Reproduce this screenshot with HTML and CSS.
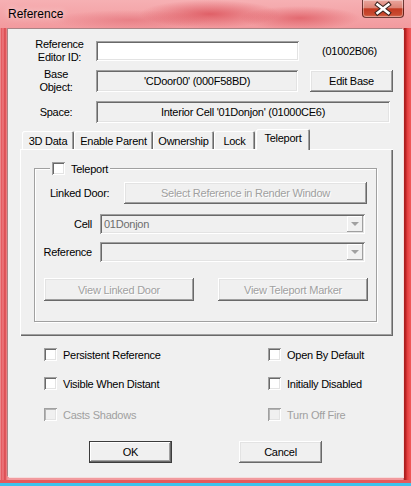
FILE: index.html
```html
<!DOCTYPE html>
<html>
<head>
<meta charset="utf-8">
<link rel="stylesheet" href="styles.css">
</head>
<body>
<div class="window">
  <div class="titlebar">
    <span class="title">Reference</span>
    <div class="close">
      <svg width="42" height="18" viewBox="0 0 42 18">
        <path d="M15.5 4.5 L26.5 13 M26.5 4.5 L15.5 13" stroke="#3b2420" stroke-width="4.6" stroke-linecap="square" fill="none"/>
        <path d="M15.5 4.5 L26.5 13 M26.5 4.5 L15.5 13" stroke="#ffffff" stroke-width="2.6" stroke-linecap="square" fill="none"/>
      </svg>
    </div>
  </div>
  <div class="client">
    <div class="row r1">
      <div class="lbl l1">Reference<br>Editor ID:</div>
      <div class="edit w-id"></div>
      <div class="formid">(01002B06)</div>
    </div>
    <div class="row r2">
      <div class="lbl l2">Base<br>Object:</div>
      <div class="static w-base">'CDoor00' (000F58BD)</div>
      <div class="btn btn-edit">Edit Base</div>
    </div>
    <div class="row r3">
      <div class="lbl l2">Space:</div>
      <div class="static w-space">Interior Cell '01Donjon' (01000CE6)</div>
    </div>
    <div class="tabs">
      <div class="tab t1">3D Data</div>
      <div class="tab t2">Enable Parent</div>
      <div class="tab t3">Ownership</div>
      <div class="tab t4">Lock</div>
      <div class="tab active">Teleport</div>
    </div>
    <div class="panel">
      <div class="group">
        <div class="legend"><span class="cb"></span><span>Teleport</span></div>
        <div class="grow g1">
          <span class="ld-lbl">Linked Door:</span>
          <div class="btn dis sel">Select Reference in Render Window</div>
        </div>
        <div class="grow g2">
          <span class="glbl">Cell</span>
          <div class="combo"><span class="ctext">01Donjon</span><div class="drop"><span class="tri"></span></div></div>
        </div>
        <div class="grow g3">
          <span class="glbl">Reference</span>
          <div class="combo"><div class="drop"><span class="tri"></span></div></div>
        </div>
        <div class="grow g4">
          <div class="btn dis vbtn">View Linked Door</div>
          <div class="btn dis vbtn">View Teleport Marker</div>
        </div>
      </div>
    </div>
    <div class="crow c1">
      <div class="chk"><span class="cb"></span><span>Persistent Reference</span></div>
      <div class="chk"><span class="cb"></span><span>Open By Default</span></div>
    </div>
    <div class="crow c2">
      <div class="chk"><span class="cb"></span><span>Visible When Distant</span></div>
      <div class="chk"><span class="cb"></span><span>Initially Disabled</span></div>
    </div>
    <div class="crow c3">
      <div class="chk disabled"><span class="cb"></span><span>Casts Shadows</span></div>
      <div class="chk disabled"><span class="cb"></span><span>Turn Off Fire</span></div>
    </div>
    <div class="buttons">
      <div class="btn def">OK</div>
      <div class="btn">Cancel</div>
    </div>
  </div>
</div>
</body>
</html>
```
FILE: styles.css
```css
* { box-sizing: border-box; }
html, body { margin: 0; padding: 0; }
body {
  width: 411px;
  height: 486px;
  overflow: hidden;
  font-family: "Liberation Sans", Arial, sans-serif;
  font-size: 11px;
  letter-spacing: -0.25px;
  color: #000;
}
.window {
  width: 411px;
  height: 486px;
  display: flex;
  flex-direction: column;
  background:
    linear-gradient(#3cc4ee, #3cc4ee) 0 483px / 411px 3px no-repeat,
    linear-gradient(#e65a5c, #e65a5c) 0 480px / 411px 3px no-repeat,
    linear-gradient(to right, #f7bcbe 0, #e05258 1px, #ee7a80 3px, #d9444a 5px, #f08e92 7px) 0 28px / 8px 458px no-repeat,
    linear-gradient(to right, #f8d8d8 0, #a81c1c 1px, #bb2626 3px, #e23a3a 4px, #ee5656 7px) 403px 28px / 8px 458px no-repeat,
    radial-gradient(ellipse 70px 14px at 210px 14px, rgba(210, 50, 60, 0.6), transparent),
    radial-gradient(ellipse 60px 12px at 300px 18px, rgba(210, 50, 60, 0.5), transparent),
    radial-gradient(ellipse 80px 10px at 130px 20px, rgba(220, 90, 100, 0.45), transparent),
    linear-gradient(to bottom, #f6b0b3 0, #f29a9e 28px, #f29a9e 100%);
}
.titlebar {
  height: 29px;
  display: flex;
  align-items: flex-start;
  flex-shrink: 0;
}
.title {
  margin-left: 8px;
  margin-top: 7px;
  font-size: 12px;
  line-height: 14px;
  letter-spacing: 0;
  color: #000;
  text-shadow: 0 0 6px rgba(255, 255, 255, 0.8);
}
.close {
  margin-left: auto;
  margin-right: 7px;
  width: 42px;
  height: 18px;
  border: 1px solid rgba(70, 24, 24, 0.75);
  border-top: none;
  border-radius: 0 0 4px 4px;
  background: linear-gradient(to bottom, #eaa69e 0, #dc8476 45%, #c33a22 52%, #c94a30 85%, #d8705a 100%);
  box-shadow: inset 0 0 0 1px rgba(255, 255, 255, 0.35);
  position: relative;
}
.close svg { position: absolute; left: -1px; top: 0; }

.client {
  margin-left: 8px;
  width: 395px;
  height: 448px;
  background: #f0f0f0;
  box-shadow: -1px -1px 0 #a98486, 1px 1px 0 #f6dcdc;
  display: flex;
  flex-direction: column;
}
.row { display: flex; align-items: center; }
.r1 { margin-top: 12px; height: 20px; }
.r2 { margin-top: 9px; height: 22px; }
.r3 { margin-top: 9px; height: 22px; }
.lbl { text-align: center; line-height: 13px; margin-left: 20px; }
.l1 { width: 63px; }
.l2 { width: 56px; }
.edit, .static, .combo {
  box-shadow: inset 1px 1px #a0a0a0, inset -1px -1px #fff, inset 2px 2px #696969, inset -2px -2px #e3e3e3;
}
.edit { background: #fff; height: 20px; margin-left: 5px; }
.w-id { width: 203px; }
.formid { margin-left: 23px; }
.static {
  height: 22px;
  margin-left: 12px;
  display: flex;
  align-items: center;
  justify-content: center;
}
.w-base { width: 202px; }
.w-space { width: 294px; }
.btn {
  display: flex;
  align-items: center;
  justify-content: center;
  background: #f0f0f0;
  box-shadow: inset -1px -1px #696969, inset 1px 1px #fff, inset -2px -2px #a0a0a0, inset 2px 2px #e3e3e3;
}
.btn-edit { width: 83px; height: 22px; margin-left: 12px; }
.btn.dis { color: #a0a0a0; text-shadow: 1px 1px 0 #fff; }
.btn.def {
  box-shadow: inset 0 0 0 1px #3c3c3c, inset -2px -2px #696969, inset 2px 2px #fff, inset -3px -3px #a0a0a0;
}

.tabs {
  margin-top: 6px;
  height: 20px;
  display: flex;
  align-items: flex-end;
  padding-left: 14px;
}
.tab {
  height: 18px;
  display: flex;
  align-items: center;
  justify-content: center;
  padding-top: 1px;
  border-radius: 2px 2px 0 0;
  box-shadow: inset 1px 1px #fff, inset -1px 0 #696969, inset -2px 0 #a0a0a0;
}
.t1 { width: 52px; }
.t2 { width: 79px; }
.t3 { width: 61px; }
.t4 { width: 41px; }
.tab.active {
  width: 54px;
  height: 21px;
  margin-bottom: -1px;
  margin-left: 1px;
  padding-top: 0;
  padding-bottom: 3px;
  background: #f0f0f0;
  position: relative;
  z-index: 1;
}
.panel {
  margin-left: 12px;
  width: 373px;
  height: 187px;
  flex-shrink: 0;
  box-shadow: inset 1px 1px #fff, inset -1px -1px #696969, inset -2px -2px #a0a0a0;
  padding-top: 19px;
  padding-left: 14px;
}
.group {
  width: 343px;
  height: 154px;
  border: 1px solid #a0a0a0;
  box-shadow: 1px 1px 0 #fff, inset 1px 1px 0 #fff;
  position: relative;
}
.legend {
  position: absolute;
  left: 15px;
  top: -7px;
  display: flex;
  align-items: center;
  gap: 6px;
  padding: 0 2px 0 2px;
  background: #f0f0f0;
  height: 13px;
}
.cb {
  width: 13px;
  height: 13px;
  flex-shrink: 0;
  background: #fff;
  box-shadow: inset 1px 1px #a0a0a0, inset -1px -1px #fff, inset 2px 2px #696969, inset -2px -2px #e3e3e3;
}
.grow { display: flex; align-items: center; }
.g1 { margin-top: 13px; height: 22px; }
.ld-lbl { margin-left: 15px; width: 74px; }
.sel { width: 243px; height: 22px; }
.g2 { margin-top: 10px; height: 20px; }
.g3 { margin-top: 8px; height: 20px; }
.glbl { width: 57px; text-align: right; }
.combo {
  margin-left: 8px;
  width: 265px;
  height: 20px;
  display: flex;
  align-items: center;
  background: #f0f0f0;
  padding: 2px;
}
.ctext { color: #6d6d6d; margin-left: 2px; }
.drop {
  margin-left: auto;
  width: 16px;
  height: 16px;
  box-shadow: inset -1px -1px #a0a0a0, inset 1px 1px #fff;
  display: flex;
  align-items: center;
  justify-content: center;
}
.tri {
  width: 0;
  height: 0;
  border-left: 4px solid transparent;
  border-right: 4px solid transparent;
  border-top: 4px solid #a0a0a0;
}
.g4 { margin-top: 16px; height: 23px; padding-left: 9px; gap: 24px; }
.vbtn { width: 150px; height: 23px; }

.crow { display: flex; padding-left: 36px; height: 13px; }
.c1 { margin-top: 12px; }
.c2 { margin-top: 16px; }
.c3 { margin-top: 18px; }
.chk { display: flex; align-items: center; gap: 6px; }
.crow .chk:first-child { width: 224px; }
.chk.disabled { color: #a0a0a0; }
.chk.disabled .cb {
  background: #f0f0f0;
  box-shadow: inset 1px 1px #a0a0a0, inset -1px -1px #fff, inset 2px 2px #b4b4b4, inset -2px -2px #e3e3e3;
}
.buttons {
  margin-top: 20px;
  display: flex;
  padding-left: 81px;
  gap: 67px;
}
.buttons .btn { width: 83px; height: 22px; }
```
